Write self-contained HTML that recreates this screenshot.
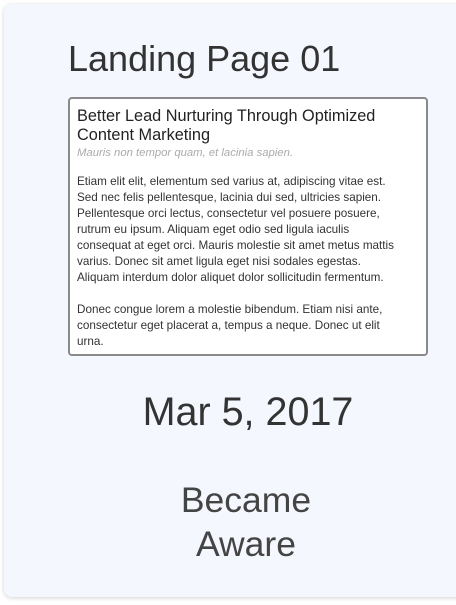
<!DOCTYPE html>
<html><head><meta charset="utf-8"><style>
html,body{margin:0;padding:0;width:456px;height:605px;background:#fff;overflow:hidden;font-family:"Liberation Sans",sans-serif;color:#333}
.card{position:absolute;left:4px;top:4px;width:460px;height:593px;background:#f5f7fe;border-radius:8px;box-shadow:0 1px 4px rgba(0,0,0,.18)}
h1{position:absolute;left:68px;top:38px;margin:0;font-weight:normal;font-size:36px;line-height:42px;color:#333}
.box{position:absolute;left:68px;top:97px;width:356px;height:255px;border:2px solid #8a8a8a;border-radius:4px;background:#fff}
.in{padding:8px 7px 0 7px;white-space:nowrap}
.t{font-size:16.3px;line-height:19px;color:#222}
.s{font-size:11.3px;font-style:italic;color:#aaa;line-height:17px}
.p{font-size:11.7px;line-height:16px;color:#333;margin-top:12px}
.p2{margin-top:16px}
.d{position:absolute;left:48px;width:400px;top:390px;text-align:center;font-size:39.5px;color:#333}
.a{position:absolute;left:46px;width:400px;top:478px;text-align:center;font-size:35.5px;line-height:44px;color:#444}
</style></head><body>
<div class="card"></div>
<h1>Landing Page 01</h1>
<div class="box"><div class="in">
<div class="t">Better Lead Nurturing Through Optimized<br>Content Marketing</div>
<div class="s">Mauris non tempor quam, et lacinia sapien.</div>
<div class="p">Etiam elit elit, elementum sed varius at, adipiscing vitae est.<br>Sed nec felis pellentesque, lacinia dui sed, ultricies sapien.<br>Pellentesque orci lectus, consectetur vel posuere posuere,<br>rutrum eu ipsum. Aliquam eget odio sed ligula iaculis<br>consequat at eget orci. Mauris molestie sit amet metus mattis<br>varius. Donec sit amet ligula eget nisi sodales egestas.<br>Aliquam interdum dolor aliquet dolor sollicitudin fermentum.</div>
<div class="p p2">Donec congue lorem a molestie bibendum. Etiam nisi ante,<br>consectetur eget placerat a, tempus a neque. Donec ut elit<br>urna.</div>
</div></div>
<div class="d">Mar 5, 2017</div>
<div class="a">Became<br>Aware</div>
</body></html>
